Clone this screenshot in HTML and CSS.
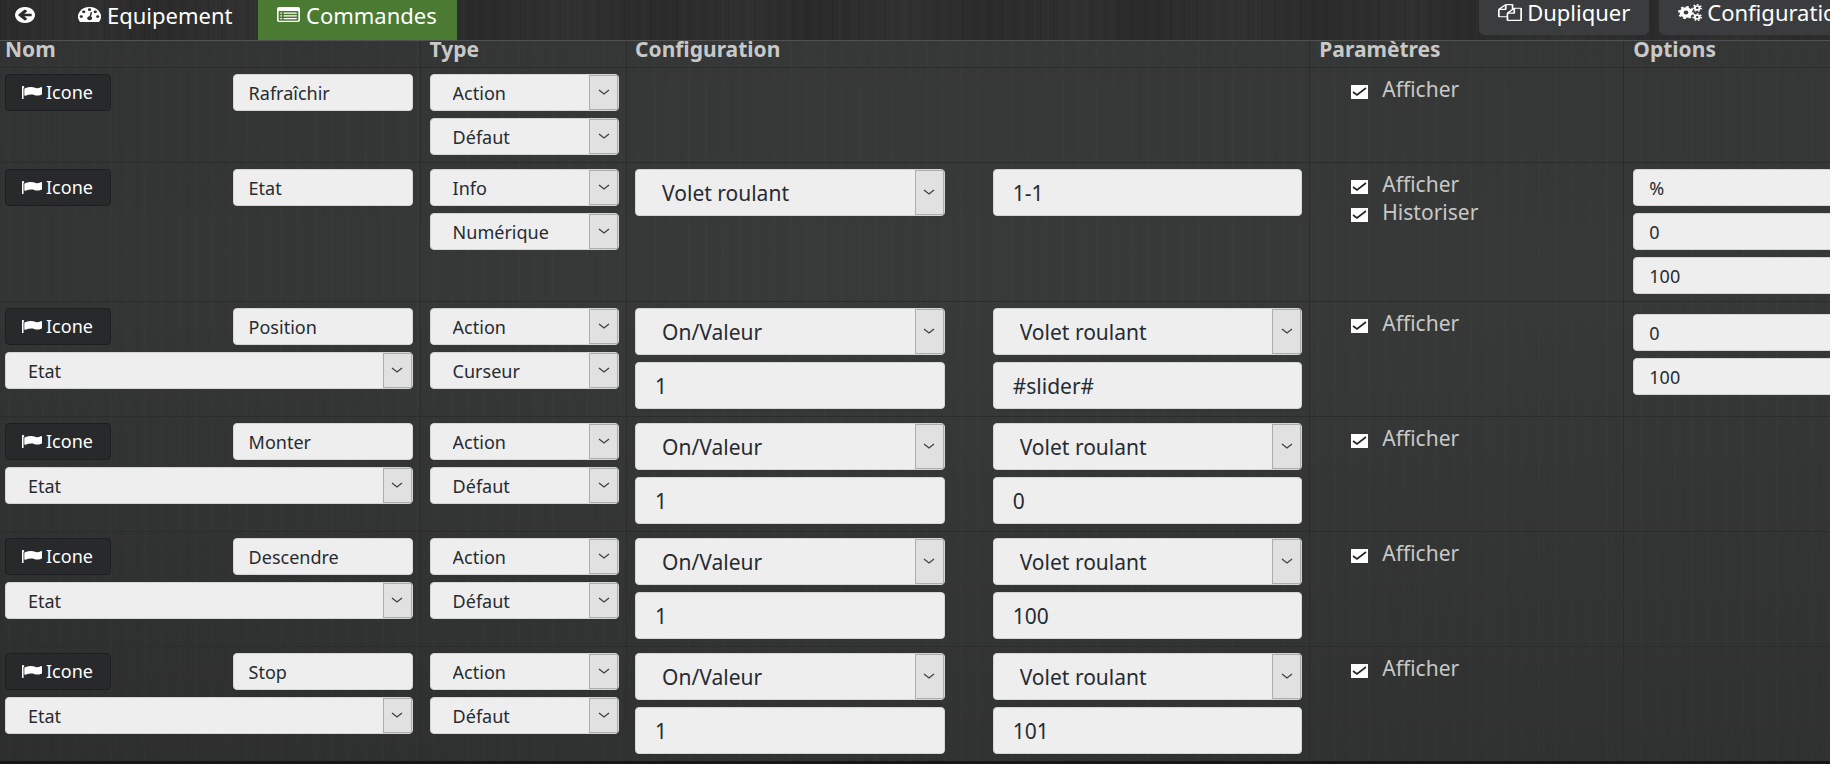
FILE: index.html
```html
<!DOCTYPE html>
<html lang="fr">
<head>
<meta charset="utf-8">
<title>Commandes</title>
<link rel="stylesheet" href="styles.css">
</head>
<body>
<svg class="sprite" aria-hidden="true">
  <symbol id="i-back" viewBox="128 128 1536 1536" preserveAspectRatio="none"><path d="M1408 960v-128q0-26-19-45t-45-19h-502l189-189q19-19 19-45t-19-45l-91-91q-18-18-45-18t-45 18l-362 362-91 91q-18 18-18 45t18 45l91 91 362 362q18 18 45 18t45-18l91-91q18-18 18-45t-18-45l-189-189h502q26 0 45-19t19-45zm256-64q0 209-103 385.500t-279.500 279.500-385.500 103-385.500-103-279.500-279.500-103-385.500 103-385.500 279.500-279.500 385.500-103 385.500 103 279.500 279.500 103 385.500z"/></symbol>
  <symbol id="i-gauge" viewBox="0 0 28 22" preserveAspectRatio="none"><path fill-rule="evenodd" d="M14 0A14 14 0 0 0 2.200 21.500Q2.500 22 3 22H25Q25.500 22 25.800 21.500A14 14 0 0 0 14 0ZM4 12a2 2 0 1 1 0 4 2 2 0 0 1 0-4ZM7 5a2 2 0 1 1 0 4 2 2 0 0 1 0-4ZM14 2a2 2 0 1 1 0 4 2 2 0 0 1 0-4ZM21 5a2 2 0 1 1 0 4 2 2 0 0 1 0-4ZM24 12a2 2 0 1 1 0 4 2 2 0 0 1 0-4ZM15.600 7.300 17.300 7.800 15.900 14A3 3 0 1 1 14 13.500Z"/></symbol>
  <symbol id="i-list" viewBox="0 0 28 22" preserveAspectRatio="none"><path fill-rule="evenodd" d="M2.500 0H25.500Q28 0 28 2.500V19.500Q28 22 25.500 22H2.500Q0 22 0 19.500V2.500Q0 0 2.500 0ZM2 6V19.500Q2 20 2.500 20H25.500Q26 20 26 19.500V6Z"/><path d="M4 8h2v2H4zM4 12h2v2H4zM4 16h2v2H4zM8 8h16v2H8zM8 12h16v2H8zM8 16h16v2H8z"/></symbol>
  <symbol id="i-copy" viewBox="0 0 1792 1792" preserveAspectRatio="none"><path d="M1696 384q40 0 68 28t28 68v1216q0 40-28 68t-68 28h-960q-40 0-68-28t-28-68v-288h-544q-40 0-68-28t-28-68v-672q0-40 20-88t48-76l408-408q28-28 76-48t88-20h416q40 0 68 28t28 68v328q68-40 128-40h416zm-544 213l-299 299h299v-299zm-640-384l-299 299h299v-299zm196 647l316-316v-416h-384v416q0 40-28 68t-68 28h-416v640h512v-256q0-40 20-88t48-76zm956 804v-1152h-384v416q0 40-28 68t-68 28h-416v640h896z"/></symbol>
  <symbol id="i-cogs" viewBox="0 0 30 26" preserveAspectRatio="none"><g fill="none" stroke="currentColor"><circle cx="10" cy="13" r="5.500" stroke-width="5"/><circle cx="10" cy="13" r="8.500" stroke-width="3" stroke-dasharray="3.340 3.340"/><circle cx="24" cy="6" r="3" stroke-width="2.500"/><circle cx="24" cy="6" r="5" stroke-width="2" stroke-dasharray="2.240 2.240"/><circle cx="24" cy="20" r="3" stroke-width="2.500"/><circle cx="24" cy="20" r="5" stroke-width="2" stroke-dasharray="2.240 2.240"/></g></symbol>
  <symbol id="i-flag" viewBox="128 128 1664 1536" preserveAspectRatio="none"><path d="M320 256q0 72-64 110v1266q0 13-9.500 22.500t-22.500 9.500h-64q-13 0-22.500-9.500t-9.500-22.500v-1266q-64-38-64-110 0-53 37.500-90.500t90.500-37.500 90.500 37.500 37.500 90.500zm1472 64v763q0 25-12.500 38.500t-39.500 27.500q-215 116-369 116-61 0-123.500-22t-108.500-48-115.500-48-142.500-22q-192 0-464 146-17 9-33 9-26 0-45-19t-19-45v-742q0-32 31-55 21-14 79-43 236-120 421-120 107 0 200 29t219 88q38 19 88 19 54 0 117.500-21t110-47 88-47 54.500-21q26 0 45 19t19 45z"/></symbol>
</svg>

<header class="topbar">
  <nav class="tabs">
    <a class="tab tab-back" href="#retour" aria-label="Retour"><svg class="icon icon-back"><use href="#i-back"/></svg></a>
    <a class="tab tab-wide" href="#equipement"><svg class="icon icon-wide"><use href="#i-gauge"/></svg>Equipement</a>
    <a class="tab tab-wide tab-active" href="#commandes"><svg class="icon icon-wide"><use href="#i-list"/></svg>Commandes</a>
  </nav>
  <div class="actions">
    <button class="action" type="button"><svg class="icon icon-tall"><use href="#i-copy"/></svg>Dupliquer</button>
    <button class="action" type="button"><svg class="icon icon-tall"><use href="#i-cogs"/></svg>Configuration</button>
  </div>
</header>

<main class="content">
<table class="commands">
  <colgroup><col class="col-name"><col class="col-type"><col class="col-config"><col class="col-params"><col class="col-options"></colgroup>
  <thead>
    <tr><th>Nom</th><th>Type</th><th>Configuration</th><th>Paramètres</th><th>Options</th></tr>
  </thead>
  <tbody>
    <tr>
      <td><div class="stack"><div class="name-row"><button class="icon-button" type="button"><svg class="icon icon-flag"><use href="#i-flag"/></svg>Icone</button><input class="field name-field" aria-label="Nom" value="Rafraîchir"></div></div></td>
      <td><div class="stack"><div class="select"><select class="field" aria-label="Type"><option>Action</option></select></div><div class="select"><select class="field" aria-label="Sous-type"><option>Défaut</option></select></div></div></td>
      <td></td>
      <td><div class="checks"><label class="check"><input type="checkbox" checked>Afficher</label></div></td>
      <td></td>
    </tr>
    <tr>
      <td><div class="stack"><div class="name-row"><button class="icon-button" type="button"><svg class="icon icon-flag"><use href="#i-flag"/></svg>Icone</button><input class="field name-field" aria-label="Nom" value="Etat"></div></div></td>
      <td><div class="stack"><div class="select"><select class="field" aria-label="Type"><option>Info</option></select></div><div class="select"><select class="field" aria-label="Sous-type"><option>Numérique</option></select></div></div></td>
      <td><div class="config"><div class="select"><select class="field large" aria-label="Catégorie"><option>Volet roulant</option></select></div><input class="field large" aria-label="Adresse" value="1-1"></div></td>
      <td><div class="checks"><label class="check"><input type="checkbox" checked>Afficher</label><label class="check"><input type="checkbox" checked>Historiser</label></div></td>
      <td><div class="stack"><input class="field" aria-label="Unité" value="%"><input class="field" aria-label="Minimum" value="0"><input class="field" aria-label="Maximum" value="100"></div></td>
    </tr>
    <tr>
      <td><div class="stack"><div class="name-row"><button class="icon-button" type="button"><svg class="icon icon-flag"><use href="#i-flag"/></svg>Icone</button><input class="field name-field" aria-label="Nom" value="Position"></div><div class="select"><select class="field" aria-label="Commande liée"><option>Etat</option></select></div></div></td>
      <td><div class="stack"><div class="select"><select class="field" aria-label="Type"><option>Action</option></select></div><div class="select"><select class="field" aria-label="Sous-type"><option>Curseur</option></select></div></div></td>
      <td><div class="config"><div class="select"><select class="field large" aria-label="Action"><option>On/Valeur</option></select></div><div class="select"><select class="field large" aria-label="Catégorie"><option>Volet roulant</option></select></div><input class="field large" aria-label="Canal" value="1"><input class="field large" aria-label="Valeur" value="#slider#"></div></td>
      <td><div class="checks"><label class="check"><input type="checkbox" checked>Afficher</label></div></td>
      <td><div class="stack stack-lower"><input class="field" aria-label="Minimum" value="0"><input class="field" aria-label="Maximum" value="100"></div></td>
    </tr>
    <tr>
      <td><div class="stack"><div class="name-row"><button class="icon-button" type="button"><svg class="icon icon-flag"><use href="#i-flag"/></svg>Icone</button><input class="field name-field" aria-label="Nom" value="Monter"></div><div class="select"><select class="field" aria-label="Commande liée"><option>Etat</option></select></div></div></td>
      <td><div class="stack"><div class="select"><select class="field" aria-label="Type"><option>Action</option></select></div><div class="select"><select class="field" aria-label="Sous-type"><option>Défaut</option></select></div></div></td>
      <td><div class="config"><div class="select"><select class="field large" aria-label="Action"><option>On/Valeur</option></select></div><div class="select"><select class="field large" aria-label="Catégorie"><option>Volet roulant</option></select></div><input class="field large" aria-label="Canal" value="1"><input class="field large" aria-label="Valeur" value="0"></div></td>
      <td><div class="checks"><label class="check"><input type="checkbox" checked>Afficher</label></div></td>
      <td></td>
    </tr>
    <tr>
      <td><div class="stack"><div class="name-row"><button class="icon-button" type="button"><svg class="icon icon-flag"><use href="#i-flag"/></svg>Icone</button><input class="field name-field" aria-label="Nom" value="Descendre"></div><div class="select"><select class="field" aria-label="Commande liée"><option>Etat</option></select></div></div></td>
      <td><div class="stack"><div class="select"><select class="field" aria-label="Type"><option>Action</option></select></div><div class="select"><select class="field" aria-label="Sous-type"><option>Défaut</option></select></div></div></td>
      <td><div class="config"><div class="select"><select class="field large" aria-label="Action"><option>On/Valeur</option></select></div><div class="select"><select class="field large" aria-label="Catégorie"><option>Volet roulant</option></select></div><input class="field large" aria-label="Canal" value="1"><input class="field large" aria-label="Valeur" value="100"></div></td>
      <td><div class="checks"><label class="check"><input type="checkbox" checked>Afficher</label></div></td>
      <td></td>
    </tr>
    <tr>
      <td><div class="stack"><div class="name-row"><button class="icon-button" type="button"><svg class="icon icon-flag"><use href="#i-flag"/></svg>Icone</button><input class="field name-field" aria-label="Nom" value="Stop"></div><div class="select"><select class="field" aria-label="Commande liée"><option>Etat</option></select></div></div></td>
      <td><div class="stack"><div class="select"><select class="field" aria-label="Type"><option>Action</option></select></div><div class="select"><select class="field" aria-label="Sous-type"><option>Défaut</option></select></div></div></td>
      <td><div class="config"><div class="select"><select class="field large" aria-label="Action"><option>On/Valeur</option></select></div><div class="select"><select class="field large" aria-label="Catégorie"><option>Volet roulant</option></select></div><input class="field large" aria-label="Canal" value="1"><input class="field large" aria-label="Valeur" value="101"></div></td>
      <td><div class="checks"><label class="check"><input type="checkbox" checked>Afficher</label></div></td>
      <td></td>
    </tr>
  </tbody>
</table>
</main>
</body>
</html>
```
FILE: styles.css
```css
* { box-sizing: border-box; }

body {
  margin: 0;
  overflow: hidden;
  background: #181617;
  color: #c8c8c8;
  font: 21px/28px "Noto Sans", "Open Sans", sans-serif;
}

.sprite { display: none; }

.icon {
  flex: none;
  fill: currentColor;
}
.icon-back { width: 20px; height: 16px; }
.icon-wide { width: 23px; height: 15px; }
.icon-tall { width: 24px; height: 17px; }
.icon-flag { width: 20px; height: 13px; }

/* Top bar */
.topbar {
  display: flex;
  justify-content: space-between;
  align-items: flex-start;
  overflow: hidden;
  border-bottom: 1px solid #515352;
  background:
    repeating-linear-gradient(90deg, rgba(0, 0, 0, 0.06) 0 2px, transparent 2px 7px, rgba(255, 255, 255, 0.01) 7px 9px, transparent 9px 13px),
    repeating-linear-gradient(90deg, #2b2b2b 0, #303030 90px, #2a2a2a 150px, #313131 240px, #2b2b2b 330px);
}

.tabs { display: flex; }

.tab {
  display: flex;
  align-items: center;
  gap: 6px;
  height: 40px;
  padding: 0 19px 11px;
  color: #fff;
  font-size: 22px;
  text-decoration: none;
}
.tab-back { padding-left: 15px; padding-right: 24px; }
.tab-wide { width: 199px; }
.tab-active { background: #4b7a32; }

.actions {
  display: flex;
  gap: 10px;
  margin-right: -39px;
}

.action {
  display: flex;
  align-items: center;
  gap: 5px;
  height: 35px;
  padding: 0 19px 11px;
  border: 0;
  border-radius: 0 0 6px 6px;
  background: #3a3c3e;
  color: #fff;
  font: 22px/24px "Noto Sans", "Open Sans", sans-serif;
}

/* Command table */
.content {
  overflow: hidden;
  background:
    linear-gradient(180deg, rgba(0, 0, 0, 0.03), rgba(0, 0, 0, 0) 35%, rgba(0, 0, 0, 0.13)),
    repeating-linear-gradient(90deg, rgba(0, 0, 0, 0.02) 0 2px, transparent 2px 8px, rgba(255, 255, 255, 0.01) 8px 10px, transparent 10px 17px),
    linear-gradient(90deg, #333534, #383a39 45%, #363837);
}

.commands {
  width: 104%;
  table-layout: fixed;
  border-collapse: separate;
  border-spacing: 0;
}
.col-name { width: 22.1%; }
.col-type { width: 10.85%; }
.col-config { width: 35.9%; }
.col-params { width: 16.5%; }

.commands th,
.commands td {
  padding: 6px 7px 7px 9px;
  border-right: 1px solid #2b2d2c;
  text-align: left;
  vertical-align: top;
}
.commands td { border-top: 1px solid #2b2d2c; }
.commands th {
  padding-top: 0;
  padding-bottom: 10px;
  font-size: 21px;
  line-height: 16px;
}
.commands th:first-child,
.commands td:first-child { padding-left: 5px; }
.commands th:nth-child(3),
.commands td:nth-child(3) { padding-left: 8px; }

.stack {
  display: grid;
  gap: 7px;
}
.stack-lower { padding-top: 6px; }

.name-row {
  display: flex;
  justify-content: space-between;
}
.name-field { flex: 0 0 180px; }

.icon-button {
  display: flex;
  align-items: center;
  gap: 4px;
  height: 37px;
  padding: 0 17px 1px 16px;
  border: 1px solid #1c1e1f;
  border-radius: 4px;
  background: #27292b;
  color: #fff;
  font: 18px/24px "Noto Sans", "Open Sans", sans-serif;
}

.field {
  display: block;
  width: 100%;
  min-width: 0;
  height: 37px;
  padding: 0 15px;
  border: 1px solid #d4d6d5;
  border-radius: 4px;
  background: #eee;
  color: #272b30;
  font: 18px/24px "Noto Sans", "Open Sans", sans-serif;
  appearance: none;
}
.large {
  height: 47px;
  padding: 0 19px;
  font-size: 21px;
  line-height: 28px;
}
select.field { padding-left: 22px; }
select.large { padding-left: 26px; }

.select { position: relative; }
.select::after {
  content: "";
  position: absolute;
  top: 1px;
  right: 1px;
  bottom: 1px;
  width: 27px;
  border: 1px solid #adadad;
  background: #e1e1e1 url("data:image/svg+xml,%3Csvg xmlns='http://www.w3.org/2000/svg' width='12' height='7'%3E%3Cpath d='M1 1l5 4 5-4' fill='none' stroke='%23404040' stroke-width='1.3'/%3E%3C/svg%3E") no-repeat center;
  pointer-events: none;
}

.config {
  display: grid;
  grid-template-columns: 1fr 1fr;
  gap: 7px 48px;
}

.checks {
  display: grid;
  padding: 1px 0 0 32px;
}
.check {
  display: flex;
  align-items: center;
  gap: 14px;
}
.check input {
  width: 17px;
  height: 14px;
  margin: 5px 0 0;
  background: #fff url("data:image/svg+xml,%3Csvg xmlns='http://www.w3.org/2000/svg' width='15' height='10'%3E%3Cpath d='M1 5l4 3 9-7' fill='none' stroke='%23222' stroke-width='1.6'/%3E%3C/svg%3E") no-repeat center;
  appearance: none;
}
```
